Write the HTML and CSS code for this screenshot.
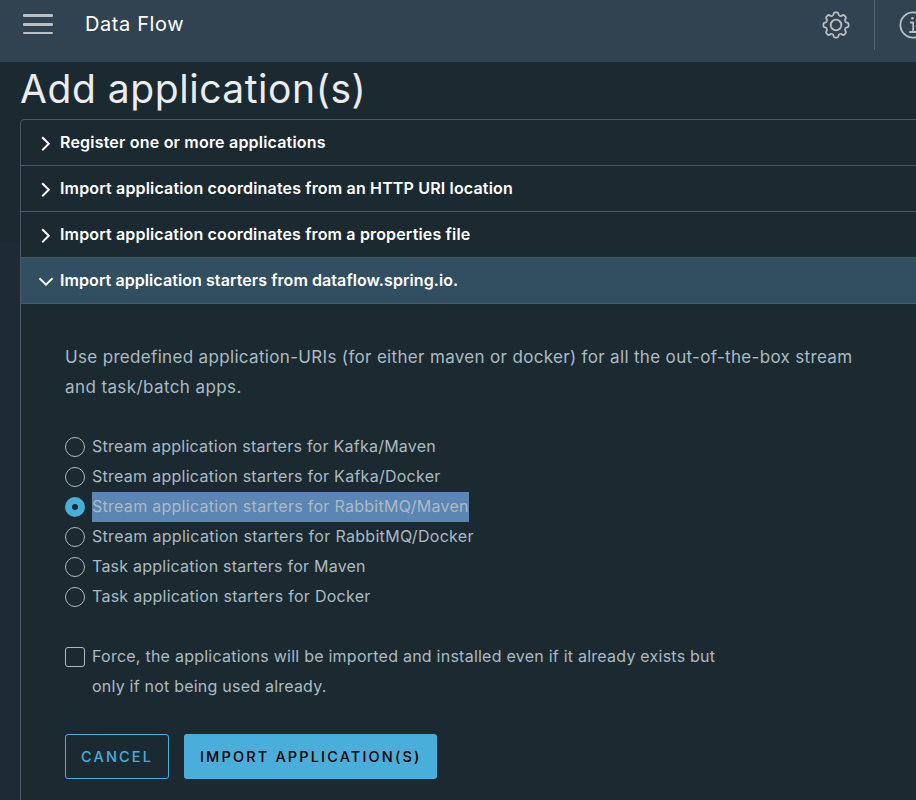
FILE: index.html
```html
<!DOCTYPE html>
<html lang="en">
<head>
<meta charset="utf-8">
<title>Data Flow</title>
<link rel="stylesheet" href="styles.css">
</head>
<body>
<header class="header">
  <button class="menu" aria-label="Menu"><span></span><span></span><span></span></button>
  <div class="brand"><span>Data Flow</span></div>
  <div class="tools">
    <svg class="gear" viewBox="-14 -14 28 28">
      <defs><path id="tooth" d="M-3.900-9.420Q-2.600-9.300-2.400-11Q-2.200-12.600-1-12.600H1Q2.200-12.600 2.400-11Q2.600-9.300 3.900-9.420"/></defs>
      <use href="#tooth"/><use href="#tooth" transform="rotate(45)"/><use href="#tooth" transform="rotate(90)"/><use href="#tooth" transform="rotate(135)"/><use href="#tooth" transform="rotate(180)"/><use href="#tooth" transform="rotate(225)"/><use href="#tooth" transform="rotate(270)"/><use href="#tooth" transform="rotate(315)"/>
      <circle r="5.300"/>
    </svg>
    <i class="divider"></i>
    <svg class="info" viewBox="0 0 28 28"><circle cx="14" cy="14" r="12.600"/><path d="M11 11.500h3.200v9.300M10.300 21h7.500"/><circle class="dot" cx="13.500" cy="7.200" r="1.300"/></svg>
  </div>
</header>
<main class="page">
  <h1><span>Add application(s)</span></h1>
  <section class="accordion">
    <div class="row"><svg viewBox="0 0 14 14"><path d="M3.200 1.300 9.800 7.800l-6.600 6.500"/></svg><span class="r1">Register one or more applications</span></div>
    <div class="row"><svg viewBox="0 0 14 14"><path d="M3.200 1.300 9.800 7.800l-6.600 6.500"/></svg><span class="r2">Import application coordinates from an HTTP URI location</span></div>
    <div class="row"><svg viewBox="0 0 14 14"><path d="M3.200 1.300 9.800 7.800l-6.600 6.500"/></svg><span class="r3">Import application coordinates from a properties file</span></div>
    <div class="row open"><svg viewBox="0 0 14 14"><path d="M.500 4.300 7 10.600l6.500-6.300"/></svg><span class="r4">Import application starters from dataflow.spring.io.</span></div>
    <div class="content">
      <p class="intro"><span class="p1">Use predefined application-URIs (for either maven or docker) for all the out-of-the-box stream</span><br><span class="p2">and task/batch apps.</span></p>
      <div class="options">
        <label class="option"><i class="radio"></i><span class="o1">Stream application starters for Kafka/Maven</span></label>
        <label class="option"><i class="radio"></i><span class="o2">Stream application starters for Kafka/Docker</span></label>
        <label class="option"><i class="radio checked"></i><span class="o3 selected">Stream application starters for RabbitMQ/Maven</span></label>
        <label class="option"><i class="radio"></i><span class="o4">Stream application starters for RabbitMQ/Docker</span></label>
        <label class="option"><i class="radio"></i><span class="o5">Task application starters for Maven</span></label>
        <label class="option"><i class="radio"></i><span class="o6">Task application starters for Docker</span></label>
      </div>
      <label class="option force"><i class="checkbox"></i><span class="force-text"><span class="f1">Force, the applications will be imported and installed even if it already exists but</span><br><span class="f2">only if not being used already.</span></span></label>
      <div class="actions">
        <button class="btn outline"><span>CANCEL</span></button>
        <button class="btn primary"><span>IMPORT APPLICATION(S)</span></button>
      </div>
    </div>
  </section>
</main>
</body>
</html>
```
FILE: styles.css
```css
* { box-sizing: border-box; }
html, body { height: 100%; }
body {
  margin: 0;
  overflow: hidden;
  background: #1b2a30;
  color: #acbac3;
  font: 16px/30px Inter, "Liberation Sans", sans-serif;
}
button { font: inherit; padding: 0; border: 0; background: none; }
svg { fill: none; flex: none; }
.header { height: 62px; background: #314351; display: flex; align-items: flex-start; overflow: hidden; }
.menu { width: 30px; height: 20px; margin: 14px 0 0 23px; display: flex; flex-direction: column; justify-content: space-between; }
.menu span { display: block; width: 30px; height: 3px; border-radius: 1px; background: #b9c0c5; }
.menu span:last-child { height: 2px; }
.brand { margin: 9px 0 0 32px; color: #fff; font-size: 20px; letter-spacing: .6px; white-space: nowrap; }
.tools { margin-left: auto; margin-right: -11px; display: flex; flex: none; }
.gear, .info { width: 28px; height: 28px; margin-top: 11px; stroke: #b9c0c5; stroke-width: 1.8; stroke-linejoin: round; }
.info .dot { fill: #b9c0c5; stroke: none; }
.divider { width: 1px; height: 50px; background: #56656f; margin: 0 24px; }
.page { height: 738px; padding-left: 20px; background: linear-gradient(#1e2b34, #1e2b34) 0 180px / 20px 100% no-repeat; }
h1 { margin: 0; height: 57px; color: #eaedf0; font-size: 39px; font-weight: 400; letter-spacing: .55px; line-height: 53px; white-space: nowrap; }
.accordion { width: 920px; height: 700px; border: 1px solid #495a65; border-radius: 4px 0 0 0; }
.row { height: 46px; padding: 0 0 1px 18px; border-bottom: 1px solid #495a65; display: flex; align-items: center; color: #fff; font-weight: 600; white-space: nowrap; }
.row svg { width: 14px; height: 14px; margin: 2px 7px 0 0; stroke: #fff; stroke-width: 2; overflow: visible; }
.open { background: #324f62; }
.content { padding: 38px 0 0 44px; white-space: nowrap; }
.intro { margin: 0 0 30px; font-size: 17px; }
.option { display: flex; align-items: flex-start; height: 30px; }
.radio, .checkbox { width: 20px; height: 20px; margin: 5px 7px 0 0; border: 1px solid #acbac3; border-radius: 50%; flex: none; }
.checkbox { border-radius: 3px; }
.checked { border: 7.5px solid #49aeda; background: #1b2a30; }
.option > span { line-height: 28px; height: 30px; }
.selected { background: #5b85b2; }
.option > .force-text { height: 60px; line-height: 30px; margin-top: -1px; }
.force { margin-top: 30px; height: 60px; }
.actions { display: flex; gap: 15px; margin-top: 32px; }
.btn { height: 45px; border-radius: 3px; font-size: 14.5px; font-weight: 500; text-align: left; padding-left: 16px; white-space: nowrap; }
.outline { width: 104px; border: 1px solid #49aeda; color: #49aeda; padding-left: 15px; }
.primary { width: 253px; background: #49aeda; color: #000; }
.btn span { letter-spacing: 2.150px; }
.r1 { letter-spacing: .2px; }
.r2 { letter-spacing: .165px; }
.r3 { letter-spacing: .16px; }
.r4 { letter-spacing: .08px; }
.p1 { letter-spacing: .33px; }
.p2 { letter-spacing: .4px; }
.o1 { letter-spacing: .25px; }
.o2 { letter-spacing: .27px; }
.o3 { letter-spacing: .28px; }
.o4 { letter-spacing: .31px; }
.o5 { letter-spacing: .23px; }
.o6 { letter-spacing: .26px; }
.f1 { letter-spacing: .24px; }
.f2 { letter-spacing: .22px; }
```
